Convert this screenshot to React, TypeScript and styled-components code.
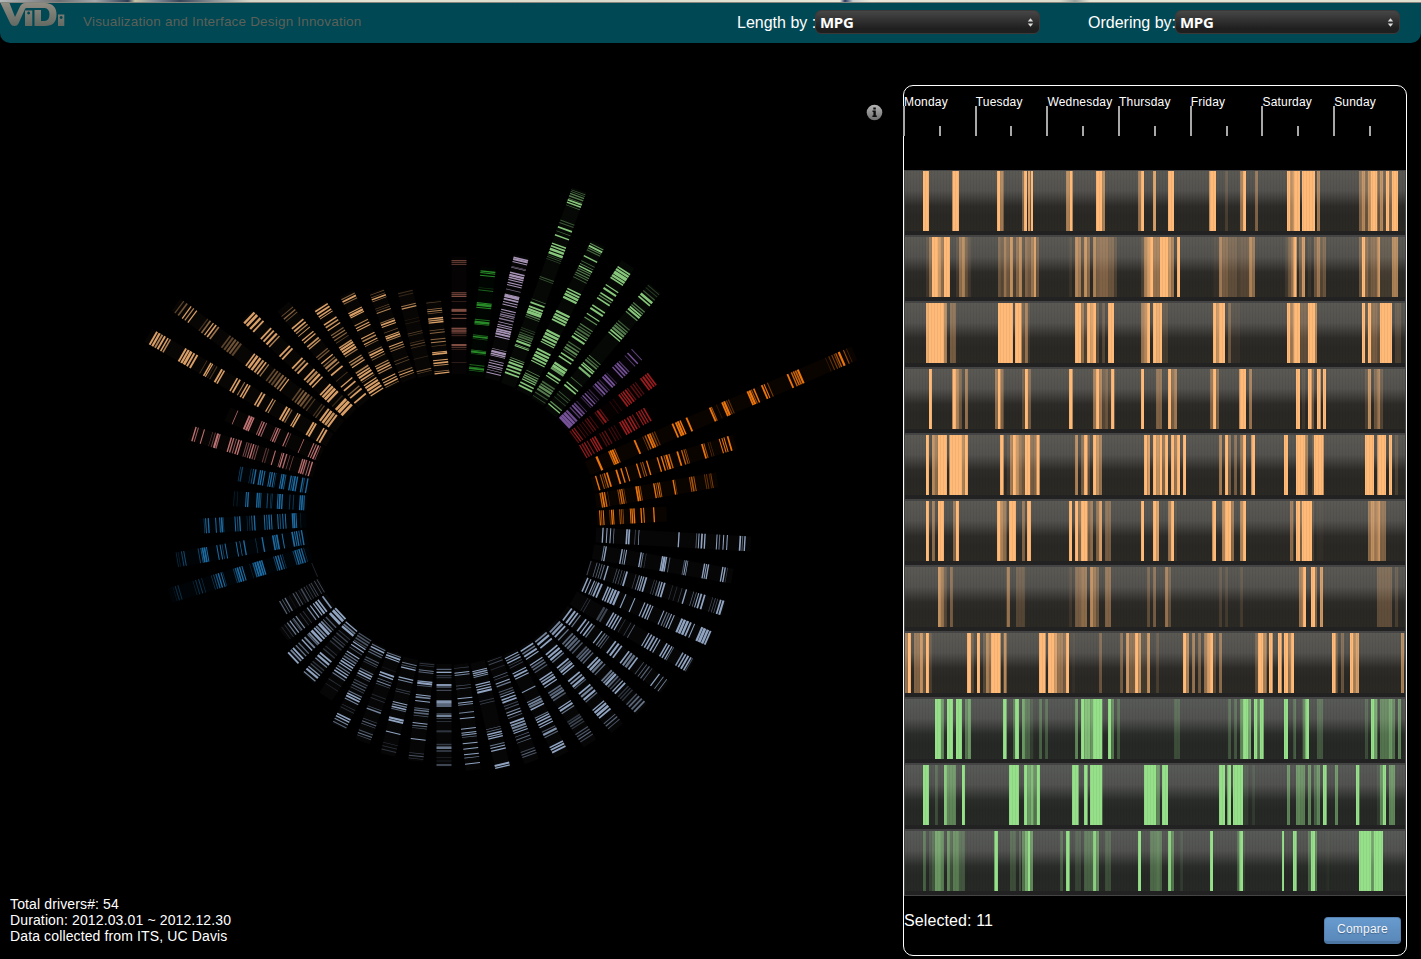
import React from "react";
import styled, { createGlobalStyle } from "styled-components";

const GlobalStyle = createGlobalStyle`
  * { box-sizing: border-box; }
  html, body { margin: 0; padding: 0; background: #000; overflow: hidden; }
  body { font-family: "Liberation Sans", Arial, sans-serif; color: #fff; }
`;

/* ---------- palette ---------- */
const BROWN = "#8a5247";
const GREEN = "#2a962a";
const LILAC = "#b49fc4";
const LIME = "#93d886";
const PURPLE = "#8059a6";
const RED = "#a82022";
const ORANGE = "#ff7f0e";
const STEEL = "#9cb2d1";
const BLUE = "#1f74b0";
const PINK = "#cf7c7c";
const PEACH = "#ebad70";

/* ---------- radial chart data ----------
   A driver's stripes are "position:thickness:opacity" in thirds of a pixel,
   read along the dominant axis of the spoke inside its quadrant. */
type Spoke = { c: string; end: number; m: string };
type Quadrant = { x: number; y: number; spokes: Spoke[] };

const QUADRANTS: Quadrant[] = [
  {
    x: 440, y: 180,
    spokes: [
      { c: BROWN, end: 230, m: "242:3 247:3:.8 253:3:.8 338:4:.7 343:3 349:4 364:2:.5 391:9 403:2 415:3 445:4 453:10:.8 461:3:.6 467:3:.5 495:6 502:4:.6 508:3:.4 547:2:.5" },
      { c: GREEN, end: 262, m: "275:4 280:3 288:3 325:2:.4 332:3:.7 370:3 376:8 384:3 420:3:.8 428:8 434:2 467:3:.7 472:5 478:2:.6 512:2 517:6 523:2:.6 556:3:.7 563:2 567:5 573:2:.7" },
      { c: LILAC, end: 228, m: "237:4 242:6 250:3 267:2 264:2:.7 282:4 290:7 297:4 304:3 312:3 319:3 332:2:.7 347:3 352:8 361:5 370:3 377:3 393:3 400:2 407:4:.8 412:2 420:4:.8 430:2 438:3 444:3 452:5 458:5 465:6 473:3 510:2 518:7 525:5 530:2 545:2 552:3 560:3 566:2 573:2 581:3" },
      { c: LIME, end: 30, m: "37:2:.5 42:2:.5 48:4:.6 55:4:.6 62:2:.5 67:5 74:4 82:2:.5 128:3:.4 135:3:.4 148:5 160:2:.5 172:4 197:4 205:5 214:7 224:7 232:2:.4 237:2:.4 243:2:.3 297:3:.4 303:2:.4 364:2:.5 374:5 386:5 394:6 402:9 411:4:.6 417:2:.5 450:2:.3 456:2:.4 464:3:.4 470:4:.5 476:5:.5 483:3:.7 490:6 500:2 504:3 540:2:.7 546:3 554:6 564:6 574:5 584:5" },
      { c: LIME, end: 190, m: "200:3:.7 207:5 213:3:.6 219:3:.5 237:4 252:2:.5 260:2:.7 267:4 273:3:.6 279:3:.6 286:3:.6 292:3:.5 300:2:.5 335:4 343:5 351:7 360:6 402:6 411:6 419:6 427:5 460:6 469:7 478:6 487:5 494:3 516:5 525:6 534:7 543:5 551:3 580:2:.7 588:3:.7 594:4:.8 600:4:.8 606:3 616:4 625:5" },
      { c: LIME, end: 253, m: "272:4 279:6 288:9 297:6 304:4 326:3 336:5 350:4 357:3:.7 365:4 387:4 396:5 412:3 423:3:.7 443:3:.6 450:3:.5 457:5:.5 465:4:.6 471:3 480:5 497:3:.5 505:4:.6 513:5:.7 520:3:.5 530:4 540:4 560:6 568:7 575:6:.8 590:5 598:3 616:4:.5 623:4:.6 630:6:.7 638:5:.6 648:3:.4 658:2:.4" },
      { c: LIME, end: 325, m: "330:2:.3 337:2:.3 346:3:.4 355:6 363:4 382:3:.6 388:3:.6 394:4 400:5 408:3:.7 436:3:.4 443:3:.6 449:5:.6 456:5:.7 463:4 470:3 540:2:.6 547:3:.5 553:4:.6 562:3 567:4 576:5:.9 605:2:.5 620:3 628:4 648:2:.4 655:2:.4 664:2:.3 678:3:.7 685:3" },
      { c: PURPLE, end: 590, m: "375:6 381:6 388:6 395:5:.9 405:3:.7 412:4 418:4:.8 425:2:.6 438:2:.5 443:3 450:3 456:2:.6 462:2:.5 474:3:.6 480:4 487:4:.8 493:2:.5 503:4 509:4 515:2:.5 533:3 540:4:.9 546:4 552:3:.7 570:2:.7 578:3 590:2:.8" },
      { c: RED, end: 640, m: "403:3:.6 409:3 415:3:.8 424:2:.5 432:2:.4 440:2:.5 448:3:.5 454:3:.6 462:2:.5 478:3:.6 485:5:.9 492:3:.6 522:2:.3 532:2:.3 550:4 556:3 562:4 569:4 575:3:.6 585:4:.5 592:3:.6 599:3:.5 615:4 622:5 629:4 635:4" },
      { c: RED, end: 632, m: "430:3 437:4:.8 444:3 452:3:.8 462:3 468:4 475:4 490:3:.5 497:3:.6 505:3:.6 517:3:.4 525:3:.4 533:2:.4 550:4 557:5 564:4 573:4 580:4 588:3:.7 600:3 607:4:.9 614:3 622:4" },
      { c: ORANGE, end: 1243, m: "478:6 515:4:.8 520:5 526:5 532:3:.7 592:5 617:2:.5 624:4:.7 632:5 638:5:.9 645:4:.5 652:3:.4 706:5 716:5 722:6 729:4 748:5 818:5 823:3:.7 838:2:.2 855:5 861:6 868:3:.5 874:3:.4 931:5 937:6 943:3:.7 950:4 974:5 981:3 991:3:.5 1051:5 1063:4:.8 1069:4:.9 1075:5:.8 1082:6 1165:2:.2 1175:3:.4 1184:3:.5 1191:3:.5 1196:4:.7 1205:6 1219:3:.6 1228:2:.3" },
      { c: ORANGE, end: 885, m: "473:4 487:3:.7 493:2:.6 499:4:.8 507:5 535:5 549:4 563:3 596:4 608:3:.6 614:3:.7 626:4 658:4 670:4 678:3:.8 685:6 693:4:.8 718:5 731:4:.8 738:3:.7 743:2:.6 792:5 798:3:.7 810:2:.4 816:2:.3 844:3 852:3 858:3 869:5" },
      { c: ORANGE, end: 832, m: "484:4:.8 490:5 497:4:.9 506:2:.3 537:3:.6 543:4:.9 549:4:.8 555:2:.5 592:5 598:5:.9 604:3:.5 645:4 651:3:.7 657:3 662:3:.7 703:4 708:2:.5 752:3:.7 758:5:.7 765:3:.7 797:3:.4 803:3:.4 811:3:.3 816:3:.5" },
      { c: ORANGE, end: 680, m: "480:3 485:3:.7 491:3 510:2:.5 516:4 521:3 540:3:.7 545:3:.6 550:2:.7 572:3 577:4 583:4 604:4 612:3 642:4" },
    ],
  },
  {
    x: 430, y: 500,
    spokes: [
      { c: STEEL, end: 962, m: "518:4 530:3 541:3 551:2:.8 590:5 597:5 615:2:.5 626:2 746:4 799:3:.5 806:3 815:5 824:4 860:3 868:3:.7 880:3 891:3 930:5 937:3:.6 944:4" },
      { c: STEEL, end: 907, m: "519:3:.8 525:4 573:4 580:3:.7 586:3 630:4 636:3:.7 645:2:.3 694:4 700:7 706:4 716:3:.5 760:3:.5 765:3 770:2 820:4 826:3 832:4 875:4 882:4 889:2:.4" },
      { c: STEEL, end: 882, m: "477:3:.4 495:2:.7 503:2:.7 510:2:.7 517:3:.7 528:4 555:2:.5 562:2:.6 570:2:.5 578:2:.5 585:5 612:2:.4 622:3:.7 629:3 635:4:.9 643:5 667:2:.4 674:2:.5 683:4:.7 690:4 698:5 722:2:.3 735:2:.3 750:2:.4 763:4 785:2:.6 793:2:.6 800:3 808:5 818:5 842:2:.4 850:2:.5 857:2:.5 866:5 874:6" },
      { c: STEEL, end: 838, m: "465:4 474:3 485:3 491:3:.7 498:5 507:5 526:4 533:4 541:5 549:6 558:6 579:3 606:3 636:3 645:4 653:4 660:3 693:3 702:3:.7 709:3:.6 716:3 724:3 748:6 756:7 765:7 774:5 785:3 808:6 816:8 825:7 833:5" },
      { c: STEEL, end: 783, m: "463:2:.3 470:2:.3 512:6:.4 520:5:.4 540:4 547:4 555:4 563:3 575:2:.3 592:2:.4 603:2:.6 646:3 654:4 662:5:.9 671:4 679:3 700:4 707:4 715:3 720:2:.6 748:4:.9 756:4 764:5 772:4 777:2:.5" },
      { c: STEEL, end: 705, m: "412:4 422:5 430:4 438:3:.7 455:4 464:3 473:4 480:3:.7 503:3 512:3:.7 518:3:.6 524:2:.5 544:4 553:5 562:4 584:4 592:5:.8 600:6:.7 609:4 628:2:.5 637:2:.6 645:3:.6 653:2:.5 675:3 687:2:.8 697:2:.8" },
      { c: STEEL, end: 636, m: "375:4:.8 382:5:.9 390:4 400:3:.7 413:4:.6 420:4:.7 427:5:.6 434:4:.6 442:3:.5 455:4:.5 461:4:.6 467:4:.6 474:3:.6 488:4 495:5 502:5:.7 510:3:.6 530:4:.7 536:4:.8 542:5 549:4:.6 556:3:.4 563:3 570:4 580:3:.3 586:3:.3 592:3:.3 605:3:.5 612:4:.6 620:4:.6 628:4:.7" },
      { c: STEEL, end: 685, m: "412:4:.8 420:5 430:4 450:4 458:5 466:5 473:3:.7 490:4 497:4:.7 503:5 510:3 530:4 538:4:.9 546:5 552:3:.5 568:4 576:5:.8 585:5 592:3:.6 617:3 624:5 632:6 640:4 657:2:.6 664:3:.6 672:2:.5" },
      { c: STEEL, end: 730, m: "442:4 450:4:.7 458:5 466:3 484:3 491:4:.6 498:4:.6 506:3:.5 528:4 535:4:.9 542:5 550:3 568:4:.6 575:5:.6 582:5:.7 590:4:.5 614:3 621:5 629:3:.7 655:4:.3 661:4:.4 668:4:.4 675:3:.3 692:3:.5 699:3:.5 706:3:.6 714:3:.4" },
      { c: STEEL, end: 765, m: "466:3 473:3:.8 480:4 488:2:.4 495:2:.4 512:3 520:5 528:3 568:3:.9 598:3:.7 605:5:.8 612:6:.7 620:4 645:3:.7 651:4 658:4 666:4 673:3 687:3:.5 695:6:.9 703:3:.6 733:4 740:5 748:5" },
      { c: STEEL, end: 785, m: "478:2:.4 487:3:.4 503:3:.2 525:2:.6 533:2:.5 545:3 553:4:.7 570:3:.5 577:3:.5 584:3 593:4 601:5 612:3:.4 620:3:.5 632:3:.8 640:3 648:2:.6 662:5 670:5:.9 678:6:.8 686:4:.8 693:3 704:2:.6 713:3:.6 722:2:.6 750:3:.4 758:3:.6 765:3:.5" },
      { c: STEEL, end: 805, m: "510:3 516:4:.9 522:3 527:3:.8 550:4 557:3 565:4 573:6 600:3:.3 608:2:.4 684:2:.7 691:2:.7 699:4 706:3 712:4 733:3:.7 740:3 749:4 793:6 800:4" },
      { c: STEEL, end: 810, m: "503:2:.4 517:3 524:3:.8 556:2:.5 565:2:.6 594:3 607:3 613:3:.8 637:3:.8 654:3 685:3 697:3 703:3 710:2:.7 729:3 745:3 762:3 772:2:.9 790:3" },
      { c: STEEL, end: 800, m: "508:3:.7 517:4 527:3:.4 533:3:.3 555:6:.9 561:4:.6 571:3:.5 606:10:.9 616:10:.6 642:3:.7 648:6:.8 655:3:.4 664:2:.4 694:6:.3 733:3:.4 739:3:.5 744:6:.7 753:3:.6 773:2:.2 783:2:.2 795:3:.8" },
    ],
  },
  {
    x: 160, y: 460,
    spokes: [
      { c: STEEL, end: 903, m: "612:3:.3 618:2:.3 632:3:.7 638:3:.6 665:4:.9 671:6 678:3:.5 706:3 713:5:.8 724:3 746:3:.6 752:4:.7 760:5:.6 768:2:.5 790:3 798:3:.7 805:2:.5 838:3 880:2:.4 888:3:.5 896:2:.3" },
      { c: STEEL, end: 885, m: "612:3:.7 619:2:.6 626:4 656:4 664:3:.8 691:2:.4 698:2:.4 730:3 737:4:.8 744:4 750:3:.6 777:6 784:5 818:3 852:2:.3 862:2:.3 872:3:.3" },
      { c: STEEL, end: 845, m: "585:3:.7 592:5 599:3 628:3:.1 643:5 651:4 662:2:.7 670:3:.8 677:2:.5 710:3:.2 720:2:.3 745:2:.5 752:4:.8 782:2:.4 790:3:.6 797:2:.5 817:3:.5 825:3:.7 832:2:.5" },
      { c: STEEL, end: 800, m: "562:3:.7 569:4 577:3:.7 584:3:.6 600:3:.5 607:3:.5 613:2:.4 634:3:.6 641:4 648:4 655:2:.5 668:3:.4 675:3:.5 683:3:.5 690:2:.4 702:3:.7 709:4 716:5 724:3:.8 742:2:.3 750:2:.3 770:4 777:4 785:3:.8 794:3:.6" },
      { c: STEEL, end: 710, m: "531:3:.5 538:4:.5 545:4:.5 552:3:.4 557:3 565:3 573:2:.5 585:3 592:3:.7 599:4:.6 606:3 613:4 620:3 628:3:.7 635:3 642:4 650:3:.7 668:2:.3 682:2:.2" },
      { c: STEEL, end: 655, m: "500:3 507:4:.7 513:5 525:2:.3 533:3:.4 542:2:.4 548:3:.4 556:3:.3 572:2:.3 580:3:.3 592:4 600:5 608:3:.8 618:3:.3 625:3:.4 633:3:.9 640:5 649:3:.8" },
      { c: STEEL, end: 398, m: "525:6 534:6 541:4 505:2:.6 513:3:.5 484:4:.8 492:6 499:4:.8 462:4:.8 470:6 478:4 441:3 449:4:.8 458:3:.6 415:3:.8 423:3:.7 431:3:.6 400:4 408:4:.8 414:3" },
      { c: STEEL, end: 370, m: "501:4:.9 473:3 480:5 487:4 455:3:.8 464:3 433:2:.3 442:2:.3 413:3:.6 421:3:.8 395:3:.7 403:3:.9 410:2:.4 378:2:.2 387:2:.3" },
      { c: STEEL, end: 366, m: "474:2:.5 482:2:.5 458:2:.4 464:2:.5 435:3:.4 443:2:.5 450:2:.3 410:3:.5 418:2:.5 427:2:.2 433:2:.3 370:3:.6 378:2:.6 386:3:.7 398:2:.1" },
      { c: STEEL, end: 461, m: "464:2:.2" },
      { c: BLUE, end: 30, m: "405:3:.6 411:4 417:4:.8 423:4 430:4:.9 437:2:.5 347:3:.6 353:4 360:4 367:3:.8 373:2:.5 275:2:.3 285:4:.8 291:5 298:6 305:5 311:4 226:3:.5 232:4:.8 238:5 245:4 252:3 160:2:.5 167:3:.6 174:4:.8 181:4 189:3 194:2:.5 105:2:.3 113:3:.4 122:3:.5 131:2:.4 45:2:.2 52:3:.4 60:3:.4" },
      { c: BLUE, end: 48, m: "400:5 407:3 413:4 420:3:.8 428:4 342:5 348:4:.8 354:5 370:3 310:4 290:2:.5 255:4 243:2 232:3 174:3 184:3 190:2:.7 199:3 118:3:.6 126:3:.8 131:5 137:5 143:3 52:2:.4 58:2:.3 68:3:.6 75:3:.7" },
      { c: BLUE, end: 120, m: "398:4 403:5 409:3 422:2:.3 354:3 361:3:.7 369:3 377:3 314:3 321:3:.8 328:4 335:3 262:2:.4 269:2:.5 276:3:.8 284:4 226:3 233:3:.7 240:4 168:3 180:3 186:5 191:2:.6 133:2:.6 138:3 146:4" },
      { c: BLUE, end: 220, m: "420:4 426:5 432:4:.8 389:3:.5 400:3:.5 353:3 359:5 366:4 322:3:.7 332:2:.6 336:2:.6 291:4 297:5:.8 302:3:.7 258:3 264:4 222:2:.3 232:2:.3" },
      { c: BLUE, end: 235, m: "425:4 430:3:.6 440:4 390:4 396:3:.8 402:5 409:4 362:3 368:5 374:3:.8 327:3 333:4 340:3 345:2:.6 298:4 304:4 311:3 270:2:.5 277:3:.7 284:4 238:2:.6 244:4:.6" },
    ],
  },
  {
    x: 140, y: 180,
    spokes: [
      { c: PINK, end: 150, m: "482:4:.9 488:4 494:4:.8 503:3:.8 511:4 425:4 434:4:.9 420:2 444:2:.6 454:2:.6 400:3 373:3:.5 380:3:.4 315:3:.6 321:3:.6 328:3:.8 335:4 342:3:.7 349:3:.6 268:4 275:4:.9 283:3:.7 291:4 298:4 212:2:.4 220:3:.5 228:6 234:4:.8 187:3 162:4 169:3:.8" },
      { c: PINK, end: 262, m: "513:3 520:3 527:4 533:2:.7 483:2 437:3 444:2:.6 400:3:.7 406:4 412:3:.8 358:3:.8 364:4 371:3:.8 320:5 327:6 333:4 285:2" },
      { c: PEACH, end: 25, m: "541:4 549:5 510:5 517:5 463:3 469:4 430:5 438:5 445:3:.6 388:3 395:3:.8 355:4 363:5 281:4 289:5 303:3:.7 312:4 319:4 235:5 242:4 213:2:.2 220:3:.3 202:4 207:3 190:2:.3 127:5 135:6 143:7 152:5 161:5 40:5 48:6 56:5:.8 64:5 73:4 80:4:.8" },
      { c: PEACH, end: 108, m: "553:5 561:6 569:6:.9 577:5 540:3:.4 533:3:.3 470:4:.4 478:4:.5 486:5:.6 494:5:.5 503:4:.4 512:3:.3 392:4:.4 400:4:.5 408:5:.4 417:5:.6 425:4:.7 433:3 331:4 339:6 348:6 357:5:.9 365:4 373:3:.7 258:4:.4 266:5:.4 274:5:.5 282:5:.5 290:5:.4 190:3:.3 198:4:.6 207:3 215:4 223:4:.7 118:3:.4 128:4:.5 140:3 148:3:.8 157:3" },
      { c: PEACH, end: 320, m: "603:6 611:7 620:6 556:4 563:5 570:6 578:5 508:4 516:5:.8 524:5 532:3 472:4 480:4:.8 488:4 434:4 442:4 378:4 386:4 395:5 403:3:.8 328:5 336:6 346:5 355:4 592:3:.2" },
      { c: PEACH, end: 380, m: "655:4 640:4 632:3:.6 618:4 607:3 572:4 560:3:.8 552:5:.8 525:3:.5 519:3:.5 537:3 545:3:.6 487:4:.9 493:3:.9 475:3 468:3 432:4 440:4 447:3:.8 455:2 395:2:.5 403:3:.6 410:2:.5 590:2:.3" },
      { c: PEACH, end: 376, m: "605:3 612:5 620:6 628:5 636:3 568:4:.8 575:4 582:5 590:4 596:2:.6 537:3:.8 544:4:.8 551:3 492:4:.9 498:5 505:5 512:5 519:3:.7 455:3:.6 462:3:.7 470:3:.6 478:2:.4 423:4 431:4:.9 440:3 383:4 391:5 399:4 405:2" },
      { c: PEACH, end: 340, m: "591:3 599:3 606:4 613:2:.6 550:3:.8 557:4:.9 564:4 571:3:.8 510:3:.6 517:5 524:3 531:2:.6 467:3 475:4:.8 484:3 490:2:.7 428:3:.8 436:3 443:3 391:3 398:6 404:3 349:3:.6 356:5 363:3:.6" },
      { c: PEACH, end: 333, m: "570:3:.6 578:3 585:2:.7 537:2:.4 546:2:.4 493:3 500:3:.8 507:2:.7 463:3 469:5 475:3:.8 452:2:.5 422:3:.6 428:5 435:3 380:2:.4 393:3:.8 386:2:.4 338:2:.5 346:2:.5 352:4 358:2:.7" },
      { c: PEACH, end: 332, m: "570:3:.6 576:2:.5 533:2:.2 485:2:.3 492:3:.4 500:2:.3 457:2:.4 463:2:.3 417:2:.15 427:2:.15 375:3:.7 382:4:.9 336:3:.25 344:3:.2" },
      { c: PEACH, end: 362, m: "367:2:.4 387:2:.7 393:3:.8 399:2:.5 415:4 421:4:.9 427:4 450:2:.5 458:3:.6 477:3:.6 486:3:.8 497:2:.4 516:3 521:5 540:3 548:5 555:3:.8 573:2:.7 579:4" },
    ],
  },
];

const PIVOT_X = 451.5;
const PIVOT_Y = 519;
const INNER = 145;
const SPOKE_W = 15;
const HEADER_H = 43;
const DRIVERS = 54;

const Spokes = () => {
  let index = 0;
  return (
    <g transform={`translate(0 ${-HEADER_H})`}>
      {QUADRANTS.flatMap((q) =>
        q.spokes.map((s) => {
          const i = index++;
          const deg = (360 / DRIVERS) * i;
          const a = (deg * Math.PI) / 180;
          const vertical = Math.abs(Math.cos(a)) > Math.abs(Math.sin(a));
          const d = vertical ? -Math.cos(a) : Math.sin(a);
          const side = (SPOKE_W / 2) * (vertical ? Math.sin(a) : Math.cos(a));
          const origin = vertical ? q.y - PIVOT_Y : q.x - PIVOT_X;
          const radius = (v: number) => (v / 3 + origin - side) / d;
          const end = radius(s.end);
          return (
            <g key={i} fill={s.c} transform={`translate(${PIVOT_X} ${PIVOT_Y}) rotate(${deg})`}>
              <rect x={0} y={-end} width={SPOKE_W} height={Math.max(1, end - INNER)} opacity={0.035} />
              {s.m.split(" ").map((t, k) => {
                const [pos, thick, op = 1] = t.split(":").map(Number);
                const h = thick / 3 / Math.abs(d);
                return <rect key={k} x={0} y={-radius(pos) - h / 2} width={SPOKE_W} height={h} opacity={op * 0.92} />;
              })}
            </g>
          );
        })
      )}
    </g>
  );
};

/* ---------- weekly strips: "from-to:opacity" in thirds of a pixel, per half of the week ---------- */
const STRIP_PEACH = "#ffba78";
const STRIP_GREEN = "#96e08a";
type Strip = { c: string; a: string; b: string };
const STRIPS: Strip[] = [
  { c: STRIP_PEACH,
    a: "69-87 157-177 291-300 300-311:.55 366-372:.35 372-381 384-390:.8 392-399 498-509:.6 509-518 588-606 606-615:.6 714-723:.5 723-732 759-768:.8",
    b: "24-42 148-168 195-204:.15 240-249:.5 249-258 285-294:.4 381-390 390-400:.65 400-420 426-465 471-480:.55 597-606:.4 606-615:.65 615-624:.3 624-633:.7 633-652 652-660:.3 660-669:.65 669-678:.2 678-687 687-696:.4 696-714" },
  { c: STRIP_PEACH,
    a: "78-87:.1 87-96:.4 96-114 114-123:.75 123-132:.45 132-150 168-177:.1 177-186:.45 186-195:.6 195-204:.25 204-213:.1 294-303:.3 303-311:.2 311-320:.5 320-330:.3 330-339:.7 339-348:.15 348-357:.4 357-366:.65 366-375:.12 375-384:.4 384-393:.3 393-401:.5 401-408:.8 408-417:.25 507-516:.08 525-534:.65 534-543:.55 543-552:.15 552-561:.7 561-570:.4 579-588:.6 588-597:.35 597-624:.4 624-642:.3 642-651:.15 723-732:.15 732-741:.6 741-750:.8 750-760 760-780:.5",
    b: "0-24 24-33:.7 33-42:.5 51-60 160-177:.05 177-186:.55 186-204:.35 204-231:.25 231-240:.15 240-267:.2 267-276:.6 276-285:.45 375-384:.1 384-393:.3 393-400:.5 400-410 417-426:.3 426-435:.75 444-453:.08 462-471:.3 471-480:.55 480-489:.2 489-498:.3 597-606:.3 606-615 615-624:.4 624-633:.25 633-652:.35 652-660:.75 660-696:.12 696-714:.6" },
  { c: STRIP_PEACH,
    a: "78-87:.9 87-132 132-141:.6 150-168:.35 294-339 345-365 365-375:.2 375-384:.5 384-390:.08 525-543 543-552:.45 552-561:.15 561-570 570-579:.8 579-588 588-597:.2 606-615:.2 624-642 723-732:.5 732-741:.65 741-750 759-768 768-780:.9",
    b: "0-6 6-24:.12 159-168 168-177:.7 177-195 204-213:.3 213-240:.05 381-390 390-400:.55 400-420 420-444:.25 444-465 465-471:.6 606-615 615-624:.15 624-633 633-652:.35 652-660:.25 660-696 705-723:.15" },
  { c: STRIP_PEACH,
    a: "87-96 157-168 168-177:.6 177-186:.3 195-204:.5 285-294:.45 294-302 302-311:.4 366-375:.2 375-384 384-393:.35 507-518 579-588:.5 588-597 597-606:.55 606-615:.2 615-624:.3 624-633:.1 633-643 723-732 768-780:.4",
    b: "0-6:.4 24-33 33-42:.35 42-51:.55 150-159:.4 159-168 168-177:.35 238-258 267-276:.5 408-420 426-435:.1 444-455 455-462:.3 471-482 489-498 615-624:.15 624-633:.7 642-652:.3 652-660:.55 660-669:.2" },
  { c: STRIP_PEACH,
    a: "78-87 96-105:.65 105-114:.45 114-141 148-186 186-195:.6 195-204 300-311 320-330:.1 330-339:.55 339-348 348-357:.7 357-366:.45 366-375:.3 375-391 391-400:.35 400-409:.4 409-419 525-534:.6 543-552:.35 552-563 563-570:.2 579-588 588-597:.7 597-606:.5 732-742 742-750:.8 759-768 768-780:.7",
    b: "0-6 6-15:.4 15-24 33-42 42-51:.5 51-60 69-78 177-186:.55 195-204 204-213:.35 222-231:.35 240-249:.4 249-258 274-285 372-384 408-436 436-444:.5 456-462:.2 462-491 615-642 652-678 687-696 705-714:.15" },
  { c: STRIP_PEACH,
    a: "78-87 96-105:.45 114-132 159-168:.4 168-177 291-302 302-311:.6 311-320:.45 327-348 366-375:.4 381-393 507-516 525-534 534-543:.4 543-563 563-570:.3 570-579:.45 588-597:.4 597-606:.8 615-633:.35 723-732 759-768 768-777:.8",
    b: "24-33:.5 33-42 42-51:.08 157-168 186-195:.6 195-213 213-222:.45 240-249:.6 249-258 390-400:.45 408-420 420-426:.4 426-456 456-462:.15 470-490:.04 624-633:.45 633-642:.7 642-652:.55 652-660:.75 660-678:.4" },
  { c: STRIP_PEACH,
    a: "114-123:.7 123-132:.5 132-141:.2 150-159:.35 320-330:.5 348-357:.2 357-375:.2 507-516:.1 525-543:.35 543-561:.45 570-579:.65 579-588:.45 588-597:.3 615-633:.4 741-750:.25 759-768:.35",
    b: "15-24:.5 24-33:.25 177-186:.15 195-204:.12 240-249:.12 417-428:.5 428-438 453-465 465-471:.4 480-489:.75 651-660:.25 660-696:.25 705-714:.15" },
  { c: STRIP_PEACH,
    a: "15-24:.5 24-33 42-60:.4 60-69:.7 69-78:.25 78-87 87-96:.15 201-213 213-222:.2 231-240 249-258:.2 258-267:.6 267-273:.4 273-302 311-320:.65 417-437 444-462 462-471:.8 471-489:.5 489-498:.35 498-507 516-525:.05 597-606:.3 660-669:.35 678-687:.75 687-705:.35 705-715 715-723:.7 723-741:.12 741-750:.7 768-777:.15",
    b: "69-78 78-87:.6 96-105:.5 114-123:.35 132-141:.5 141-150:.8 150-159 159-168:.2 177-186:.45 285-294:.25 294-309 309-320:.6 327-338 354-365 372-384 384-392:.5 392-402 516-527 527-533:.3 543-552:.3 570-579 579-588:.6 588-597:.8 723-732:.6" },
  { c: STRIP_GREEN,
    a: "105-123 123-132:.5 141-159 168-186 195-204:.4 204-213:.6 309-320 339-345:.3 345-357 366-375:.6 375-390:.3 390-400:.12 417-426:.3 435-444:.25 525-534:.5 543-553 553-571:.8 571-579:.6 579-607 624-633 633-642:.4 651-660:.25",
    b: "42-60:.2 204-213:.25 222-231:.25 240-249:.5 249-265 265-273:.7 282-292 292-300:.4 300-311 372-384 400-408:.3 428-436:.4 436-447 471-489:.25 615-624:.2 633-643 643-652:.65 660-687:.4 687-696:.6 696-705:.4 714-723:.5" },
  { c: STRIP_GREEN,
    a: "69-87 105-114:.2 132-141:.85 141-168:.5 186-195 327-357 372-382 382-391:.6 391-401:.75 401-410:.4 410-420 516-536 552-563 570-607 732-768 768-780:.5",
    b: "6-24 177-195 202-213 219-249 249-265:.1 276-285:.1 381-390:.5 408-420:.5 420-435:.45 444-453:.5 462-471:.3 471-480:.5 489-500 525-534:.5 588-598 651-660:.1 660-669:.5 669-678 687-705:.5" },
  { c: STRIP_GREEN,
    a: "69-78:.3 87-96:.15 96-105:.25 105-123:.6 123-132:.45 141-150:.5 150-159:.2 159-177:.45 177-195:.25 283-294 330-348:.2 357-363:.2 366-375:.4 375-384:.7 384-391 391-399:.5 480-489:.25 498-509 525-543:.15 552-579:.3 579-588:.9 588-597:.5 615-633:.2 714-723 750-768:.35 768-780:.4",
    b: "0-6:.3 24-33:.9 33-42:.4 60-69:.1 150-159 231-238:.3 238-249 249-255:.1 366-372 399-410 444-453:.3 453-465 465-471:.4 500-507:.04 597-634 634-642:.6 642-669" },
];

const StripMarks = ({ strip }: { strip: Strip }) => {
  const parse = (text: string, shift: number) =>
    text.split(" ").map((t) => {
      const [range, op = "1"] = t.split(":");
      const [from, to] = range.split("-").map(Number);
      return { x: (from + shift) / 3, w: (to - from) / 3, o: Number(op) };
    });
  const marks = [...parse(strip.a, -15), ...parse(strip.b, 765)];
  return (
    <svg width="500" height="60" viewBox="0 0 500 60" fill={strip.c}>
      {marks.map((m, i) => (
        <rect key={i} x={m.x} y={0} width={m.w} height={60} opacity={m.o} />
      ))}
    </svg>
  );
};

/* ---------- layout ---------- */
const Page = styled.div`
  width: 1421px;
  height: 959px;
  background: #000;
  display: flex;
  flex-direction: column;
`;
const PhotoEdge = styled.div`
  height: 3px;
  flex: none;
  border-bottom: 1px solid #85857e;
  background: linear-gradient(90deg, #b5b8b8 0, #6d7073 60px, #a5a9aa 95px, #2e3c55 128px, #c5c4a8 135px, #88909a 155px, #39465a 180px,
    #8e9699 215px, #d5d6c8 250px, #e3e3d3 370px, #d9dacb 600px, #e8e7d8 840px, #26365f 845px, #c9cfd0 853px, #e9e8da 870px, #dcdccc 1060px, #9aa39e 1075px, #e6e6d6 1090px, #dfe0d0 1421px);
`;
const TopBar = styled.header`
  height: 40px;
  flex: none;
  display: flex;
  background: #004854;
  border-radius: 0 0 10px 10px;
`;
const Logo = styled.svg`
  display: block;
  width: 66px;
  height: 26px;
`;
const Tagline = styled.div`
  width: 671px;
  padding-left: 17px;
  font-size: 13.5px;
  line-height: 37px;
  letter-spacing: 0.19px;
  color: #5c6058;
  white-space: nowrap;
`;
const Field = styled.div<{ $width: number }>`
  width: ${(p) => p.$width}px;
  display: flex;
  align-items: flex-start;
  padding-top: 7px;
`;
const FieldLabel = styled.label<{ $width: number }>`
  width: ${(p) => p.$width}px;
  font-size: 16px;
  line-height: 25px;
  white-space: nowrap;
`;
const Select = styled.div`
  width: 225px;
  height: 24px;
  border-radius: 6px;
  border: 1px solid #3b3838;
  background: linear-gradient(#464646, #1f1f1f 80%);
  display: flex;
  align-items: center;
  justify-content: space-between;
  padding: 0 5px 0 4px;
  font: 700 15px/22px "Open Sans", "Noto Sans", sans-serif;
  letter-spacing: -0.3px;
`;
const Body = styled.main`
  display: flex;
  flex: 1;
  min-height: 0;
`;
const ChartColumn = styled.section`
  width: 903px;
  position: relative;
  display: flex;
  flex-direction: column;
`;
const InfoButton = styled.svg`
  position: absolute;
  left: 866px;
  top: 61px;
`;
const Chart = styled.svg`
  display: block;
  flex: none;
`;
const Summary = styled.div`
  padding: 0 10px;
  font-size: 14px;
  line-height: 16px;
  letter-spacing: 0.13px;
`;
const Panel = styled.aside`
  margin-top: 42px;
  width: 504px;
  height: 871px;
  border: 1px solid #fff;
  border-radius: 10px;
  display: flex;
  flex-direction: column;
`;
const Week = styled.div`
  height: 84px;
  display: grid;
  grid-template-columns: repeat(7, 71.7px);
  align-items: start;
`;
const DayCell = styled.div`
  padding-top: 9px;
  font-size: 12px;
  line-height: 14px;
  letter-spacing: 0.2px;
  white-space: nowrap;
`;
const Ticks = styled.div`
  height: 30px;
  margin: -3px 0 0 -1px;
  display: flex;
  align-items: flex-end;
`;
const Tick = styled.i<{ $major?: boolean }>`
  width: 2px;
  height: ${(p) => (p.$major ? 30 : 10)}px;
  margin-right: 33.8px;
  background: #a8a8a8;
`;
const StripRow = styled.div`
  height: 66px;
  flex: none;
  border: 1px solid #444;
  background: #222;
`;
const StripTrack = styled.div<{ $green: boolean }>`
  position: relative;
  height: 60px;
  background: ${(p) =>
    p.$green
      ? "linear-gradient(#585a57 0, #525350 33%, #2b2d2a 58%, #262825 75%, #272926)"
      : "linear-gradient(#5a5954 0, #53524e 33%, #2e2c29 58%, #292824 75%, #2a2924)"};
  svg { display: block; }
  &::after {
    content: "";
    position: absolute;
    inset: 0;
    background: repeating-linear-gradient(90deg, transparent 0 2px, rgba(0, 0, 0, 0.05) 2px 3px);
  }
`;
const PanelFooter = styled.footer`
  flex: 1;
  display: flex;
  justify-content: space-between;
  align-items: flex-start;
`;
const Selected = styled.div`
  padding-top: 15px;
  font-size: 16px;
  line-height: 19px;
  letter-spacing: 0.1px;
`;
const CompareButton = styled.button`
  margin: 21px 5px 0 0;
  width: 77px;
  height: 27px;
  padding: 0;
  border: 1px solid #5481b0;
  border-bottom: 3px solid #4d76a3;
  border-radius: 4px;
  background: linear-gradient(#689bce, #5a88ba);
  color: #f2f6fb;
  font: 12px/21px "Liberation Sans", Arial, sans-serif;
  letter-spacing: 0.2px;
  text-shadow: 0 1px 1px rgba(0, 0, 0, 0.3);
`;

const Arrows = () => (
  <svg width="7" height="9" viewBox="0 0 7 9" fill="#ddd">
    <path d="M3.5 0.3 6.200 3.600H.8zM3.500 8.700 .8 5.400h5.400z" />
  </svg>
);

const DAYS = ["Monday", "Tuesday", "Wednesday", "Thursday", "Friday", "Saturday", "Sunday"];

export default function App() {
  return (
    <>
      <GlobalStyle />
      <Page>
        <PhotoEdge />
        <TopBar>
          <Logo viewBox="0 3 66 26">
            <defs>
              <linearGradient id="metal" x1="0" y1="0" x2="0" y2="1">
                <stop offset="0" stopColor="#8f8c82" />
                <stop offset="1" stopColor="#636a63" />
              </linearGradient>
            </defs>
            <path
              fill="url(#metal)"
              fillRule="evenodd"
              d="M0.500 3H9.500L15 17 20 6.500Q21.700 3 25 3H45Q56.500 3.500 56.500 14.500 56.500 26 45 26H34.500V10H41V21H44.500Q49.500 20.500 49.500 14.500 49.500 8.500 44.500 8H26.500Q25.500 8 25 9L18.500 23.500Q17.300 26 14.500 26 11.500 26 10.300 23.500ZM25 10.500H32.300V26H25ZM28.600 11.600a1.500 1.500 0 1 0 .1 0ZM58 14.500H64.300V26H58ZM61.100 16a1.500 1.500 0 1 0 .1 0Z"
            />
          </Logo>
          <Tagline>Visualization and Interface Design Innovation</Tagline>
          <Field $width={351}>
            <FieldLabel $width={78}>Length by :</FieldLabel>
            <Select>MPG<Arrows /></Select>
          </Field>
          <Field $width={320}>
            <FieldLabel $width={87}>Ordering by:</FieldLabel>
            <Select>MPG<Arrows /></Select>
          </Field>
        </TopBar>
        <Body>
          <ChartColumn>
            <Chart width="903" height="853" viewBox="0 0 903 853">
              <Spokes />
            </Chart>
            <InfoButton width="17" height="17" viewBox="0 0 17 17">
              <defs>
                <linearGradient id="disc" x1="0" y1="0" x2="0" y2="1">
                  <stop offset="0" stopColor="#b4b4b4" />
                  <stop offset="1" stopColor="#6e6e6e" />
                </linearGradient>
              </defs>
              <circle cx="8.500" cy="8.500" r="7.800" fill="url(#disc)" />
              <path fill="#0c0c0c" d="M7.300 3.400h2.500v2.200H7.300zM6.500 6.600h3.300v4.900h1v1.500H6.400v-1.500h1V8.100h-.9z" />
            </InfoButton>
            <Summary>
              <div>Total drivers#: 54</div>
              <div>Duration: 2012.03.01 ~ 2012.12.30</div>
              <div>Data collected from ITS, UC Davis</div>
            </Summary>
          </ChartColumn>
          <Panel>
            <Week>
              {DAYS.map((day) => (
                <DayCell key={day}>
                  {day}
                  <Ticks>
                    <Tick $major />
                    <Tick />
                  </Ticks>
                </DayCell>
              ))}
            </Week>
            {STRIPS.map((strip, i) => (
              <StripRow key={i}>
                <StripTrack $green={strip.c === STRIP_GREEN}>
                  <StripMarks strip={strip} />
                </StripTrack>
              </StripRow>
            ))}
            <PanelFooter>
              <Selected>Selected: 11</Selected>
              <CompareButton>Compare</CompareButton>
            </PanelFooter>
          </Panel>
        </Body>
      </Page>
    </>
  );
}
